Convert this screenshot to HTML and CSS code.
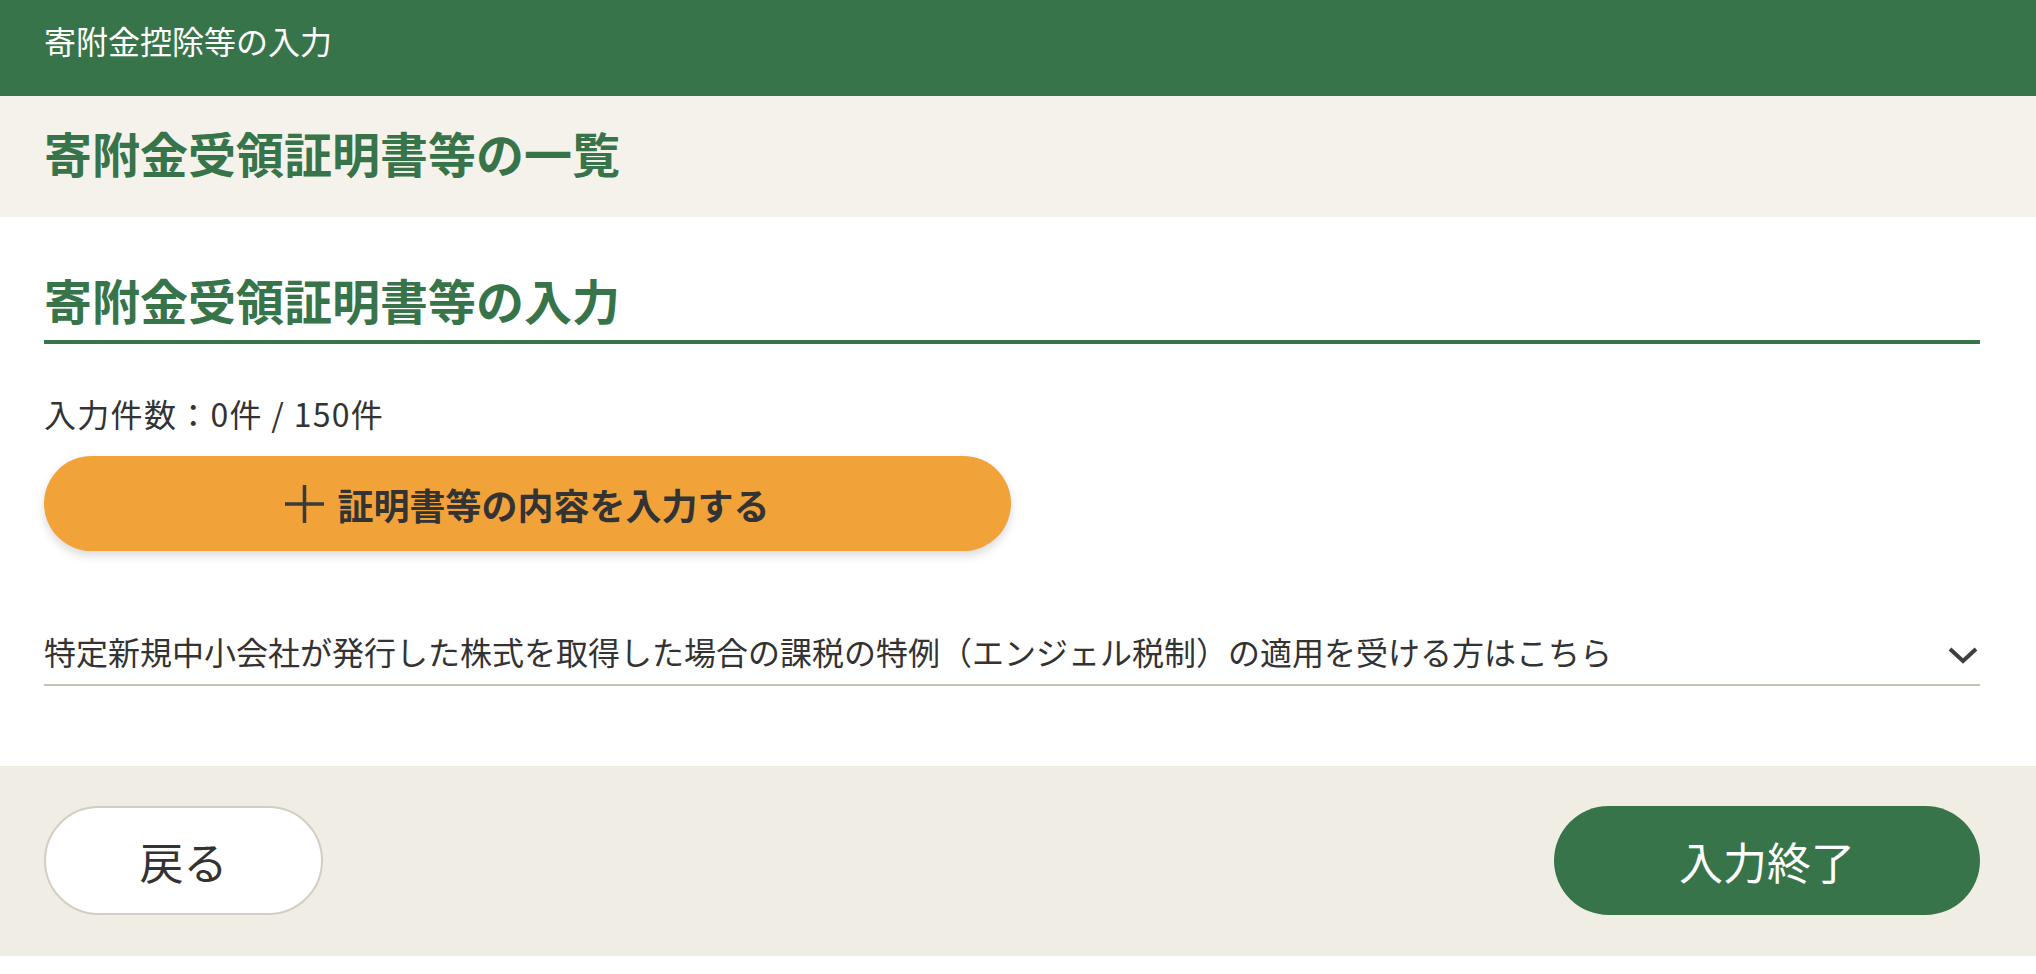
FILE: index.html
```html
<!DOCTYPE html>
<html lang="ja">
<head>
  <meta charset="UTF-8">
  <title>寄附金控除等の入力</title>
  <link rel="stylesheet" href="styles.css">
</head>
<body>

  <!-- ヘッダー -->
  <header class="cabecera">
    <p class="cabecera-titulo">寄附金控除等の入力</p>
  </header>

  <!-- ページタイトル -->
  <div class="banda-titulo">
    <h1>寄附金受領証明書等の一覧</h1>
  </div>

  <!-- 入力エリア -->
  <main class="contenido">
    <h2 class="seccion-titulo">寄附金受領証明書等の入力</h2>

    <p class="contador">入力件数：0件 / 150件</p>

    <button type="button" class="boton-agregar">
      <svg class="icono-mas" width="39" height="38" viewBox="0 0 39 38" aria-hidden="true">
        <path d="M19.5 0 V38 M0 19 H39" stroke="#3a3a3a" stroke-width="3.5" fill="none"/>
      </svg>
      <span>証明書等の内容を入力する</span>
    </button>

    <div class="acordeon">
      <span>特定新規中小会社が発行した株式を取得した場合の課税の特例（エンジェル税制）の適用を受ける方はこちら</span>
      <svg class="icono-flecha" width="30" height="17" viewBox="0 0 30 17" aria-hidden="true">
        <path d="M2 2 L15 14 L28 2" stroke="#3f3f3f" stroke-width="4" fill="none"/>
      </svg>
    </div>
  </main>

  <!-- フッター -->
  <footer class="pie">
    <button type="button" class="boton-volver">戻る</button>
    <button type="button" class="boton-terminar">入力終了</button>
  </footer>

</body>
</html>
```

FILE: styles.css
```css
body {
  font-family: "Noto Sans CJK JP", "Noto Sans", sans-serif;
  margin: 0;
  padding: 0;
  background: #ffffff;
  color: #333333;
}

/* ヘッダー */
.cabecera {
  height: 96px;
  box-sizing: border-box;
  background: #38744a;
  padding: 16px 56px 0 44px;
}

.cabecera-titulo {
  margin: 0;
  color: #ffffff;
  font-size: 32px;
  line-height: 1.5;
}

/* ページタイトル */
.banda-titulo {
  background: #f5f2ec;
  padding: 20px 56px 29px 44px;
}

.banda-titulo h1 {
  margin: 0;
  font-size: 48px;
  line-height: 1.5;
  color: #38744a;
  font-weight: bold;
}

/* 入力エリア */
.contenido {
  padding: 46px 56px 80px 44px;
}

.seccion-titulo {
  margin: 0;
  font-size: 48px;
  line-height: 1.5;
  color: #38744a;
  font-weight: bold;
  padding-bottom: 5px;
  border-bottom: 4px solid #38744a;
}

.contador {
  margin: 45px 0 19px;
  font-size: 32px;
  line-height: 1.5;
  letter-spacing: 1.3px;
}

.boton-agregar {
  display: flex;
  align-items: center;
  justify-content: center;
  gap: 13px;
  width: 967px;
  height: 95px;
  border: none;
  border-radius: 48px;
  background: #f1a33a;
  color: #333333;
  font-family: inherit;
  font-size: 36px;
  font-weight: bold;
  cursor: pointer;
  box-shadow: 0 5px 10px rgba(0, 0, 0, 0.14);
}

.acordeon {
  display: flex;
  align-items: center;
  justify-content: space-between;
  margin-top: 76px;
  padding-bottom: 9px;
  border-bottom: 2px solid #c7c0b6;
  font-size: 32px;
  line-height: 1.5;
}

.icono-flecha {
  margin-right: 2px;
  margin-top: 8px;
}

/* フッター */
.pie {
  display: flex;
  justify-content: space-between;
  align-items: center;
  background: #f0ede5;
  padding: 40px 56px 41px 44px;
}

.pie button {
  height: 109px;
  border-radius: 55px;
  font-family: inherit;
  font-size: 44px;
  cursor: pointer;
}

.boton-volver {
  width: 279px;
  background: #ffffff;
  color: #333333;
  border: 2px solid #d3cdc3;
}

.boton-terminar {
  width: 426px;
  background: #38744a;
  color: #ffffff;
  border: none;
}
```
